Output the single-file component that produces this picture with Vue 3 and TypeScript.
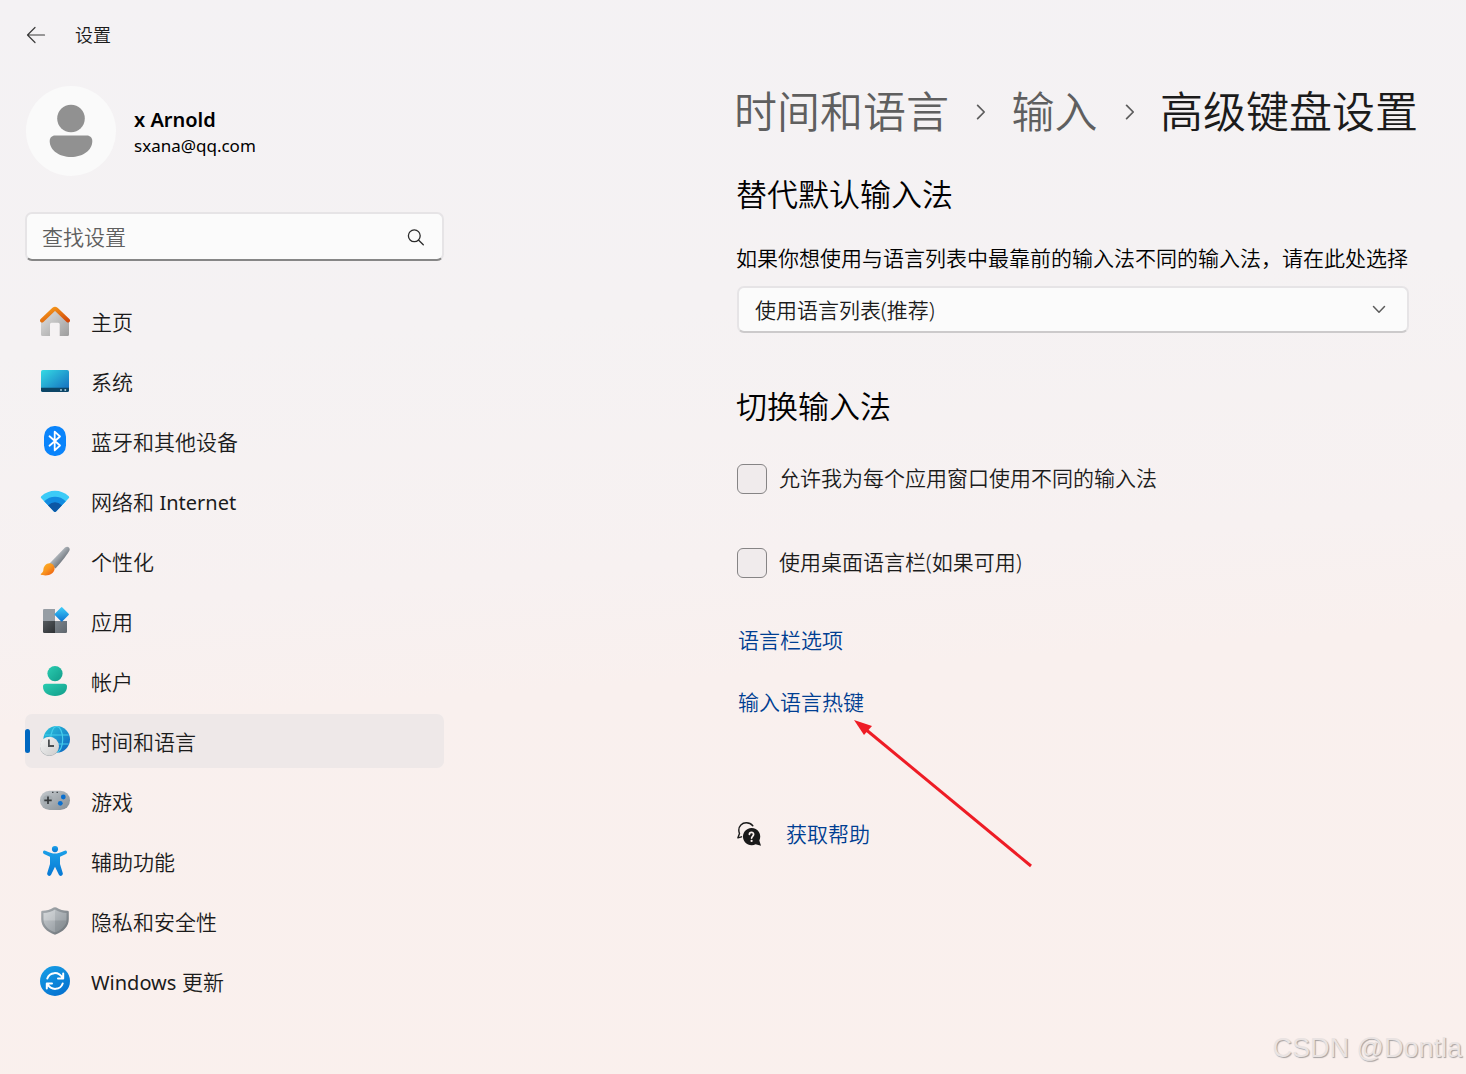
<script setup lang="ts">
import { ref } from 'vue'

interface NavItem {
  id: string
  label: string
}

const navItems: NavItem[] = [
  { id: 'home', label: '主页' },
  { id: 'system', label: '系统' },
  { id: 'bluetooth', label: '蓝牙和其他设备' },
  { id: 'network', label: '网络和 Internet' },
  { id: 'personal', label: '个性化' },
  { id: 'apps', label: '应用' },
  { id: 'accounts', label: '帐户' },
  { id: 'time', label: '时间和语言' },
  { id: 'gaming', label: '游戏' },
  { id: 'access', label: '辅助功能' },
  { id: 'privacy', label: '隐私和安全性' },
  { id: 'update', label: 'Windows 更新' },
]

// Latin words are set apart from the Chinese so each script gets its own weight.
function runs(label: string): string[] {
  return label.split(/([A-Za-z]+)/).filter((part) => part.length > 0)
}

function isLatin(part: string): boolean {
  return /^[A-Za-z]+$/.test(part)
}

const active = ref('time')
const query = ref('')
const method = ref('default')
const perWindow = ref(false)
const languageBar = ref(false)
</script>

<template>
  <div class="page">
    <header class="topbar">
      <button class="back" type="button" aria-label="返回">
        <svg width="20" height="18" viewBox="0 0 20 18" fill="none" stroke="#3a3a3a" stroke-width="1.2" stroke-linecap="round" stroke-linejoin="round">
          <path d="M18.500 9H1.500M9 1.500L1.500 9L9 16.500" />
        </svg>
      </button>
      <span class="app-title">设置</span>
    </header>

    <div class="layout">
      <aside class="sidebar">
        <div class="profile">
          <svg class="avatar" width="90" height="90" viewBox="0 0 90 90">
            <circle cx="45" cy="45" r="45" fill="#fafafa" />
            <circle cx="45" cy="32.500" r="13.800" fill="#919191" />
            <path d="M29 49.500H61C64 49.500 66.300 51.800 66.300 55C66.300 64.500 56.500 71 45 71S23.700 64.500 23.700 55C23.700 51.800 26 49.500 29 49.500Z" fill="#919191" />
          </svg>
          <div class="who">
            <div class="name">x Arnold</div>
            <div class="mail">sxana@qq.com</div>
          </div>
        </div>

        <label class="search">
          <input v-model="query" type="text" placeholder="查找设置" aria-label="查找设置" />
          <svg width="18" height="18" viewBox="0 0 18 18" fill="none" stroke="#2b2b2b" stroke-width="1.300" stroke-linecap="round">
            <circle cx="7.300" cy="7.800" r="5.900" />
            <path d="M11.700 12.200L16.300 16.800" />
          </svg>
        </label>

        <nav class="nav">
          <a
            v-for="item in navItems"
            :key="item.id"
            href="#"
            class="nav-item"
            :class="{ active: item.id === active }"
            @click.prevent="active = item.id"
          >
            <svg class="nav-icon" width="30" height="30" viewBox="0 0 30 30" fill="none">
              <template v-if="item.id === 'home'">
                <defs>
                  <linearGradient id="homeBody" x1="0" y1="0" x2="1" y2="1"><stop stop-color="#e4e4e4" /><stop offset="1" stop-color="#9d9d9d" /></linearGradient>
                  <linearGradient id="homeRoof" x1="0" y1="0" x2="1" y2="1"><stop stop-color="#f9a11b" /><stop offset="1" stop-color="#d2490b" /></linearGradient>
                </defs>
                <path d="M15 3L29 15.500V28.500Q29 30 27.500 30H19.700V18.200Q19.700 16.700 18.200 16.700H11.500Q10 16.700 10 18.200V30H2.500Q1 30 1 28.500V15.500Z" fill="url(#homeBody)" />
                <path d="M2 14.500L13.800 3.200Q15 2.200 16.200 3.200L28 14.500" stroke="url(#homeRoof)" stroke-width="4" stroke-linecap="round" stroke-linejoin="round" />
              </template>
              <template v-else-if="item.id === 'system'">
                <defs><linearGradient id="sys" x1="0" y1="0" x2="1" y2="1"><stop stop-color="#35dbe4" /><stop offset="1" stop-color="#1266bd" /></linearGradient></defs>
                <rect x="1" y="4" width="28" height="22" rx="1.800" fill="url(#sys)" />
                <path d="M1 21.700H29V24.200Q29 26 27.200 26H2.800Q1 26 1 24.200Z" fill="#0c4566" />
                <path d="M20.200 23.200H21.800V24.800H20.200ZM24.500 23.200H26.100V24.800H24.500Z" fill="#c7e4f2" />
              </template>
              <template v-else-if="item.id === 'bluetooth'">
                <rect x="4" y="0" width="22" height="30" rx="10.500" fill="#0a84fb" />
                <path d="M9.500 10.300L20 19.500L14.700 24.300V5.700L20 10.500L9.500 19.700" stroke="#fff" stroke-width="1.800" stroke-linejoin="round" stroke-linecap="round" />
              </template>
              <template v-else-if="item.id === 'network'">
                <clipPath id="wifiClip"><path d="M1.300 10.300C9 2.900 21 2.900 28.700 10.300Q29.700 11.300 28.700 12.300L16 25.500Q15 26.300 14 25.500L1.300 12.300Q0.300 11.300 1.300 10.300Z" /></clipPath>
                <g clip-path="url(#wifiClip)">
                  <path d="M0 0H30V30H0Z" fill="#3ccbf7" />
                  <circle cx="15" cy="25.500" r="14.800" fill="#128be0" />
                  <circle cx="15" cy="25.500" r="9.200" fill="#0c57a4" />
                </g>
              </template>
              <template v-else-if="item.id === 'personal'">
                <defs>
                  <linearGradient id="brushHandle" x1="0.300" y1="0.300" x2="0.700" y2="0.700"><stop stop-color="#c2c8cd" /><stop offset="1" stop-color="#686f77" /></linearGradient>
                  <linearGradient id="brushTip" x1="0" y1="0" x2="1" y2="1"><stop stop-color="#fdb827" /><stop offset="0.500" stop-color="#f9951f" /><stop offset="1" stop-color="#e9530e" /></linearGradient>
                </defs>
                <path d="M9.500 17.500L25 1.600C27 -0.400 30.500 1 29.500 4.300C28.500 7 22 15.500 15.500 22.500Z" fill="url(#brushHandle)" />
                <path d="M5 19.500C7.500 16.500 11.500 16.800 13.500 19.200C15.500 21.800 14.700 25.200 12.200 27.300C8.800 30 3.500 29.800 0.700 28.500C0.500 27.500 3 26.800 3.300 24.500C3.500 22.500 3.600 21 5 19.500Z" fill="url(#brushTip)" />
              </template>
              <template v-else-if="item.id === 'apps'">
                <defs>
                  <linearGradient id="appDiamond" x1="0" y1="0" x2="1" y2="1"><stop stop-color="#3fd0fa" /><stop offset="1" stop-color="#0a70d0" /></linearGradient>
                  <linearGradient id="appDark" x1="0" y1="0" x2="1" y2="1"><stop stop-color="#565b5f" /><stop offset="1" stop-color="#2d3033" /></linearGradient>
                  <linearGradient id="appMid" x1="0" y1="0" x2="1" y2="1"><stop stop-color="#7d858c" /><stop offset="1" stop-color="#5f666d" /></linearGradient>
                </defs>
                <path d="M4.300 3H15V15H3V4.300Q3 3 4.300 3Z" fill="#969da4" />
                <path d="M3 15H15V27H4.300Q3 27 3 25.700Z" fill="url(#appDark)" />
                <path d="M15 15H27V25.700Q27 27 25.700 27H15Z" fill="url(#appMid)" />
                <rect x="16.300" y="3" width="10.800" height="10.800" rx="1" fill="url(#appDiamond)" transform="rotate(45 21.700 8.400)" />
              </template>
              <template v-else-if="item.id === 'accounts'">
                <defs><linearGradient id="acc" x1="0" y1="0" x2="1" y2="1"><stop stop-color="#2bcdb1" /><stop offset="1" stop-color="#119c89" /></linearGradient></defs>
                <circle cx="15" cy="7.600" r="7.600" fill="url(#acc)" />
                <path d="M6 17.700H24Q27 17.700 27 20.500C27 26.500 22 30 15 30S3 26.500 3 20.500Q3 17.700 6 17.700Z" fill="url(#acc)" />
              </template>
              <template v-else-if="item.id === 'time'">
                <defs>
                  <linearGradient id="globe" x1="0" y1="0" x2="1" y2="1"><stop stop-color="#2dc8dc" /><stop offset="1" stop-color="#0b61bf" /></linearGradient>
                  <linearGradient id="clock" x1="0" y1="0" x2="1" y2="1"><stop stop-color="#f6f6f6" /><stop offset="1" stop-color="#cccccc" /></linearGradient>
                </defs>
                <circle cx="16.700" cy="13.300" r="13.300" fill="url(#globe)" />
                <g stroke="#45cdec" stroke-width="1.200">
                  <ellipse cx="16.700" cy="13.300" rx="6" ry="12.800" />
                  <path d="M4.800 9H28.600M4.800 18H28.600" />
                </g>
                <circle cx="9.400" cy="20.600" r="9.500" fill="#aab0b3" />
                <circle cx="9.400" cy="20.200" r="9.400" fill="url(#clock)" />
                <path d="M8.900 13.500V20H14" stroke="#4b4f52" stroke-width="1.800" />
              </template>
              <template v-else-if="item.id === 'gaming'">
                <defs><linearGradient id="pad" x1="0" y1="0" x2="1" y2="1"><stop stop-color="#c4c9cd" /><stop offset="1" stop-color="#868e94" /></linearGradient></defs>
                <rect x="0" y="4.700" width="30" height="19.300" rx="9.600" fill="url(#pad)" />
                <circle cx="8" cy="14.300" r="5.400" fill="#a5acb1" />
                <path d="M8 10.600V18M4.300 14.300H11.700" stroke="#363a3d" stroke-width="1.700" />
                <circle cx="23.300" cy="11" r="2.400" fill="#0b6fce" />
                <circle cx="20.300" cy="17.300" r="2.400" fill="#0b6fce" />
                <path d="M12 6.300H13.500M16.500 6.300H18" stroke="#44494d" stroke-width="1.300" />
              </template>
              <template v-else-if="item.id === 'access'">
                <defs><linearGradient id="man" x1="0" y1="0" x2="0" y2="1"><stop stop-color="#1ba0e8" /><stop offset="1" stop-color="#0778d4" /></linearGradient></defs>
                <circle cx="15" cy="3.100" r="3.100" fill="url(#man)" />
                <path d="M4.200 4.400C6 4.200 9.500 7.400 15 7.400S24 4.200 25.800 4.400C27.400 4.800 27.400 7.200 26 8L20 10.800V18L22.800 27.300C23.300 29.600 20 31 18.900 28.800L15 20.800L11.100 28.800C10 31 6.700 29.600 7.200 27.300L10 18V10.800L4 8C2.600 7.200 2.600 4.800 4.200 4.400Z" fill="url(#man)" />
              </template>
              <template v-else-if="item.id === 'privacy'">
                <defs>
                  <linearGradient id="shieldEdge" x1="0" y1="0" x2="1" y2="1"><stop stop-color="#a9aeb2" /><stop offset="1" stop-color="#6b7278" /></linearGradient>
                  <linearGradient id="shieldIn" x1="0" y1="0" x2="1" y2="1"><stop stop-color="#c9cdd0" /><stop offset="1" stop-color="#8b9298" /></linearGradient>
                </defs>
                <path d="M13.600 1.600Q15 0.700 16.400 1.600C20 4 23.500 4.600 27.500 4.700Q28.800 4.800 28.800 6V13C28.800 20.500 23.500 25.700 15 28.700C6.500 25.700 1.200 20.500 1.200 13V6Q1.200 4.800 2.500 4.700C6.500 4.600 10 4 13.600 1.600Z" fill="url(#shieldEdge)" />
                <path d="M15 3.500C18.500 5.800 22 6.800 26.500 7V13C26.500 19 22.500 23.500 15 26.300C7.500 23.500 3.500 19 3.500 13V7C8 6.800 11.500 5.800 15 3.500Z" fill="url(#shieldIn)" />
                <path d="M15 3.500V14.500H3.500V7C8 6.800 11.500 5.800 15 3.500Z" fill="#fff" opacity="0.220" />
                <path d="M15 14.500H26.200C25.600 19.800 21.500 23.900 15 26.300Z" fill="#5b6268" opacity="0.220" />
              </template>
              <template v-else>
                <defs><linearGradient id="upd" x1="0" y1="0" x2="0.600" y2="1"><stop stop-color="#18a0e6" /><stop offset="1" stop-color="#0674d1" /></linearGradient></defs>
                <circle cx="15" cy="15" r="15" fill="url(#upd)" />
                <g stroke="#fff" stroke-width="2" stroke-linecap="round" stroke-linejoin="round">
                  <path d="M7.300 12.500C9.500 6 18.500 4.800 22.800 12.200M23.200 7.500V12.600H18" />
                  <path d="M22.700 17.500C20.500 24 11.500 25.200 7.200 17.800M6.800 22.500V17.400H12" />
                </g>
              </template>
            </svg>
            <span class="nav-label"><span v-for="(part, i) in runs(item.label)" :key="i" :class="{ latin: isLatin(part) }">{{ part }}</span></span>
          </a>
        </nav>
      </aside>

      <main class="main">
        <h1 class="crumbs">
          <a href="#">时间和语言</a>
          <svg width="12" height="18" viewBox="0 0 12 18" fill="none" stroke="#5c5c5c" stroke-width="2" stroke-linecap="round" stroke-linejoin="round"><path d="M3 1.500L10.500 9L3 16.500" /></svg>
          <a href="#">输入</a>
          <svg width="12" height="18" viewBox="0 0 12 18" fill="none" stroke="#5c5c5c" stroke-width="2" stroke-linecap="round" stroke-linejoin="round"><path d="M3 1.500L10.500 9L3 16.500" /></svg>
          <span>高级键盘设置</span>
        </h1>

        <section class="override">
          <h2>替代默认输入法</h2>
          <label class="desc" for="method">如果你想使用与语言列表中最靠前的输入法不同的输入法，请在此处选择</label>
          <div class="select">
            <select id="method" v-model="method">
              <option value="default">使用语言列表(推荐)</option>
            </select>
            <svg width="14" height="9" viewBox="0 0 14 9" fill="none" stroke="#5c5c5c" stroke-width="1.500" stroke-linecap="round" stroke-linejoin="round"><path d="M1.500 1.500L7 7.300L12.500 1.500" /></svg>
          </div>
        </section>

        <section class="switching">
          <h2>切换输入法</h2>
          <div class="checks">
            <label class="check"><input v-model="perWindow" type="checkbox" /><span>允许我为每个应用窗口使用不同的输入法</span></label>
            <label class="check"><input v-model="languageBar" type="checkbox" /><span>使用桌面语言栏(如果可用)</span></label>
          </div>
          <div class="links">
            <a href="#">语言栏选项</a>
            <div class="pointed">
              <a href="#">输入语言热键</a>
              <svg class="arrow" width="180" height="150" viewBox="0 0 180 150">
                <path d="M10 10L177 148" stroke="#ee1c25" stroke-width="3" />
                <path d="M0 2L18 8L10 17Z" fill="#ee1c25" />
              </svg>
            </div>
          </div>
        </section>

        <div class="help">
          <svg width="24" height="24" viewBox="0 0 24 24" fill="none">
            <path d="M15.800 3.800C14.200 1.800 11.800 0.800 9.300 0.800C4.800 0.800 1.800 4 1.800 8C1.800 9.500 2.200 10.800 2.500 11.500L0.900 15.800L4.500 14.800" stroke="#1a1a1a" stroke-width="1.400" stroke-linejoin="round" stroke-linecap="round" />
            <path d="M14.500 6A8.600 8.600 0 1 0 18.600 22.200L24 23.800L22.300 18.500A8.600 8.600 0 0 0 14.500 6Z" fill="#1a1a1a" />
            <path d="M12.400 12.400C12.500 9.600 16.700 9.800 16.600 12.400C16.500 14.300 14.600 14.300 14.600 16.100" stroke="#faf0ee" stroke-width="1.700" stroke-linecap="round" />
            <circle cx="14.600" cy="18.900" r="1.100" fill="#faf0ee" />
          </svg>
          <a href="#">获取帮助</a>
        </div>
      </main>
    </div>

    <div class="watermark">CSDN @Dontla</div>
  </div>
</template>

<style>
body {
  margin: 0;
}
</style>

<style scoped>
.page {
  position: relative;
  box-sizing: border-box;
  min-height: 100vh;
  overflow: hidden;
  background: linear-gradient(176deg, #f4f2f4 0%, #f5f2f3 30%, #f7f1f1 52%, #f9f0ee 62%, #faf0ed 100%);
  color: #1b1b1b;
  font-family: "Noto Sans", "Noto Sans CJK SC", sans-serif;
  font-size: 21px;
  line-height: 30px;
  font-weight: 350;
}

a {
  color: #003e92;
  text-decoration: none;
}

.topbar {
  display: flex;
  align-items: center;
  gap: 29px;
  height: 70px;
  padding-left: 26px;
}

.back {
  display: flex;
  padding: 0;
  border: 0;
  background: none;
}

.app-title {
  font-size: 18px;
}

.layout {
  display: flex;
  align-items: flex-start;
  justify-content: space-between;
  padding: 14px 48px 48px 25px;
}

.sidebar {
  flex: none;
  width: 419px;
  padding-top: 2px;
}

.profile {
  display: flex;
  align-items: center;
  gap: 18px;
  padding-left: 1px;
}

.who {
  padding-top: 2px;
}

.name {
  color: #000;
  font-size: 20px;
  line-height: 28px;
  font-weight: 600;
}

.mail {
  color: #000;
  font-size: 17px;
  line-height: 24px;
  font-weight: 400;
}

.search {
  display: flex;
  align-items: center;
  box-sizing: border-box;
  height: 49px;
  margin-top: 36px;
  padding: 0 17px 0 15px;
  border: 2px solid #e6e4e6;
  border-bottom-color: #868686;
  border-radius: 7px;
  background: #fbfbfb;
}

.search input {
  flex: 1;
  min-width: 0;
  padding: 0;
  border: 0;
  outline: 0;
  background: none;
  color: #1b1b1b;
  font: inherit;
}

.search input::placeholder {
  color: #5f5f5f;
  opacity: 1;
}

.nav {
  display: flex;
  flex-direction: column;
  gap: 6px;
  margin-top: 33px;
}

.nav-item {
  position: relative;
  display: flex;
  align-items: center;
  gap: 21px;
  height: 54px;
  padding-left: 15px;
  border-radius: 7px;
  color: #1b1b1b;
}

.nav-label {
  padding-top: 2px;
  white-space: pre;
}

.latin {
  font-size: 20px;
  font-weight: 400;
}

.nav-item.active {
  background: #eee8e8;
}

.nav-item.active::before {
  content: "";
  position: absolute;
  left: 0;
  top: 15px;
  width: 5px;
  height: 24px;
  border-radius: 3px;
  background: #0067c0;
}

.main {
  flex: none;
  width: 682px;
  white-space: nowrap;
}

.crumbs {
  display: flex;
  align-items: center;
  margin: 0 0 0 -2px;
  font-size: 43px;
  line-height: 56px;
  font-weight: 350;
}

.crumbs a {
  color: #5f5f5f;
}

.crumbs svg {
  margin: 0 26px;
}

h2 {
  margin: 34px 0 0;
  color: #000;
  font-size: 31px;
  line-height: 40px;
  font-weight: 350;
}

.desc {
  display: block;
  margin-top: 29px;
  color: #000;
}

.select {
  position: relative;
  display: flex;
  align-items: center;
  margin: 13px 9px 0 1px;
}

.select select {
  width: 100%;
  height: 47px;
  padding: 0 48px 0 16px;
  border: 2px solid #e6e4e6;
  border-bottom-color: #cccacb;
  border-radius: 7px;
  appearance: none;
  background: #fbfbfb;
  color: #1b1b1b;
  font: inherit;
}

.select svg {
  position: absolute;
  right: 23px;
  pointer-events: none;
}

.switching h2 {
  margin-top: 53px;
}

.checks {
  display: flex;
  flex-direction: column;
  gap: 54px;
  margin-top: 38px;
  padding-left: 1px;
}

.check {
  display: flex;
  align-items: center;
  gap: 12px;
  height: 30px;
}

.check span {
  padding-bottom: 2px;
}

.check input {
  appearance: none;
  box-sizing: border-box;
  width: 30px;
  height: 30px;
  margin: 0;
  border: 1px solid #868485;
  border-radius: 6px;
  background: #f0ebec;
}

.check input:checked {
  background: #0067c0;
}

.links {
  display: flex;
  flex-direction: column;
  gap: 32px;
  margin-top: 47px;
  padding-left: 2px;
}

.pointed {
  position: relative;
}

.arrow {
  position: absolute;
  left: 116px;
  top: 31px;
  pointer-events: none;
}

.help {
  display: flex;
  align-items: center;
  gap: 25px;
  margin-top: 102px;
  padding-left: 1px;
}

.watermark {
  position: absolute;
  right: 4px;
  bottom: 10px;
  color: #e9e3e2;
  font-family: "Liberation Sans", sans-serif;
  font-size: 27px;
  line-height: 32px;
  font-weight: 400;
  text-shadow: 1px 1px 1px #a5a1a1;
}
</style>
